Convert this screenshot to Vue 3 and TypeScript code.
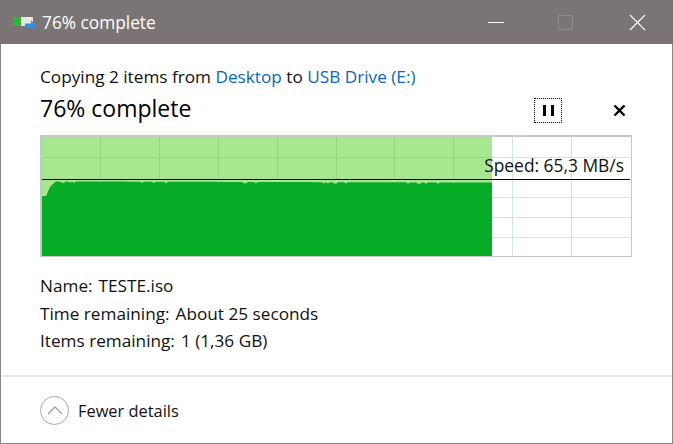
<script setup lang="ts">
const gridX = [58, 117, 176, 235, 294, 352, 411, 470, 529];
const gridY = [20, 60, 80, 100];

// top edge of the transfer curve, in chart coordinates
const edge: [number, number][] = [[0, 59], [4, 59], [8, 50], [12, 46]];
for (let x = 14; x <= 450; x += 2) {
  const notch = Math.sin(x * 0.83) * Math.sin(x * 0.21) + Math.sin(x * 0.07) > 1.2 ? 1.4 : 0;
  edge.push([x, 44.4 + notch + (x / 450) * 1.2]);
}
const curve = `M0 119 L${edge.map(([x, y]) => `${x} ${y}`).join(' L')} L450 119 Z`;
</script>

<template>
  <div class="window">
    <header class="titlebar">
      <div class="title">
        <svg class="app-icon" width="24" height="16" viewBox="0 0 24 16">
          <rect x="0" y="1" width="20" height="9" fill="#e6e6e6" />
          <rect x="0" y="1" width="8" height="9" fill="#2fb52f" />
          <path d="M12 7.5h6V4l5 5.5-5 5.5v-3.5h-6z" fill="#3a8ee0" />
        </svg>
        <span>76% complete</span>
      </div>
      <div class="controls">
        <span class="minimize"></span>
        <span class="maximize"></span>
        <svg class="close" width="17" height="17" viewBox="0 0 17 17">
          <path d="M1 1l15 15M16 1L1 16" stroke="#fff" stroke-width="1.1" fill="none" />
        </svg>
      </div>
    </header>

    <main class="body">
      <p class="copying">Copying 2 items from <a>Desktop</a> to <a>USB Drive (E:)</a></p>
      <div class="status-row">
        <h1>76% complete</h1>
        <div class="actions">
          <button class="pause"><i></i><i></i></button>
          <svg class="cancel" width="13" height="13" viewBox="0 0 13 13">
            <path d="M1.5 1.5l10 10M11.5 1.5l-10 10" stroke="#000" stroke-width="2.4" fill="none" />
          </svg>
        </div>
      </div>

      <div class="chart">
        <svg class="plot" width="589" height="119" viewBox="0 0 589 119">
          <rect x="0" y="0" width="450" height="119" fill="#a8e690" />
          <line v-for="x in gridX" :key="'x' + x" :x1="x + 0.5" :x2="x + 0.5" y1="0" y2="119" stroke="#cfe8dc" />
          <line v-for="y in gridY" :key="'y' + y" x1="0" x2="589" :y1="y + 0.5" :y2="y + 0.5" stroke="#cfe8dc" />
          <g stroke="#94d680">
            <line v-for="x in gridX.filter(v => v < 450)" :key="'gx' + x" :x1="x + 0.5" :x2="x + 0.5" y1="0" y2="42" />
            <line x1="0" x2="450" y1="20.5" y2="20.5" />
          </g>
          <path :d="curve" fill="#06ac25" />
          <line x1="0" x2="588" y1="42.5" y2="42.5" stroke="#000" stroke-width="1" />
        </svg>
        <span class="speed">Speed: 65,3 MB/s</span>
      </div>

      <dl class="details">
        <div><dt>Name:</dt><dd>TESTE.iso</dd></div>
        <div><dt>Time remaining:</dt><dd>About 25 seconds</dd></div>
        <div><dt>Items remaining:</dt><dd>1 (1,36 GB)</dd></div>
      </dl>
    </main>

    <footer class="footer">
      <span class="chevron">
        <svg width="16" height="9" viewBox="0 0 16 9">
          <path d="M1 8l7-7 7 7" stroke="#a0a0a0" stroke-width="1.3" fill="none" />
        </svg>
      </span>
      <span class="fewer">Fewer details</span>
    </footer>
  </div>
</template>

<style scoped>
.window {
  width: 673px;
  height: 444px;
  box-sizing: border-box;
  display: flex;
  flex-direction: column;
  background: #fff;
  border-left: 1px solid #8a8685;
  border-right: 1px solid #8a8685;
  border-bottom: 1px solid #8a8685;
  font-family: "Open Sans", "Noto Sans", sans-serif;
  font-size: 17.2px;
  color: #111;
}

.titlebar {
  height: 44px;
  flex: none;
  background: #7a7574;
  display: flex;
  align-items: center;
  justify-content: space-between;
  color: #fff;
  margin: 0 -1px;
}

.title {
  display: flex;
  align-items: center;
  gap: 5px;
  padding-left: 13px;
  font-size: 17.3px;
}

.app-icon {
  margin-top: 4px;
}

.controls {
  display: flex;
  align-items: center;
  padding-right: 27px;
}

.minimize {
  width: 16px;
  height: 1px;
  background: #fff;
}

.maximize {
  width: 15px;
  height: 15px;
  box-sizing: border-box;
  margin: 0 56px 0 54px;
  border: 1px solid #8f8b8a;
}

.body {
  flex: 1;
  padding: 21px 39px 0;
}

.copying {
  margin: 0;
  height: 24px;
  line-height: 24px;
}

.copying a {
  color: #0a66b8;
}

.status-row {
  display: flex;
  align-items: center;
  justify-content: space-between;
  height: 34px;
  margin-top: 2px;
}

h1 {
  margin: 0;
  font-size: 23px;
  font-weight: 400;
  color: #000;
}

.actions {
  display: flex;
  align-items: center;
  gap: 51px;
  padding-right: 7px;
  margin-top: 5px;
}

.pause {
  width: 28px;
  height: 25px;
  box-sizing: border-box;
  padding: 0;
  display: flex;
  align-items: center;
  justify-content: center;
  gap: 5px;
  background: #fff;
  border: 1px dotted #000;
}

.pause i {
  width: 3px;
  height: 11px;
  background: #000;
}

.chart {
  position: relative;
  width: 592px;
  height: 122px;
  box-sizing: border-box;
  margin-top: 10px;
  border: 1px solid #c8c8c8;
  border-width: 2px 1px 1px 2px;
}

.plot {
  display: block;
}

.speed {
  position: absolute;
  right: 7px;
  top: 16px;
  line-height: 24px;
  color: #111;
  font-size: 17.4px;
}

.details {
  margin: 15px 0 0;
}

.details div {
  display: flex;
  gap: 6px;
  height: 27.5px;
  line-height: 27.5px;
}

.details dt,
.details dd {
  margin: 0;
}

.footer {
  height: 68px;
  flex: none;
  box-sizing: border-box;
  border-top: 2px solid #e5e5e5;
  display: flex;
  align-items: center;
  gap: 9px;
  padding-left: 39px;
}

.fewer {
  font-size: 16.4px;
}

.chevron {
  width: 27px;
  height: 27px;
  border: 1px solid #a8a8a8;
  border-radius: 50%;
  display: flex;
  align-items: center;
  justify-content: center;
}
</style>
